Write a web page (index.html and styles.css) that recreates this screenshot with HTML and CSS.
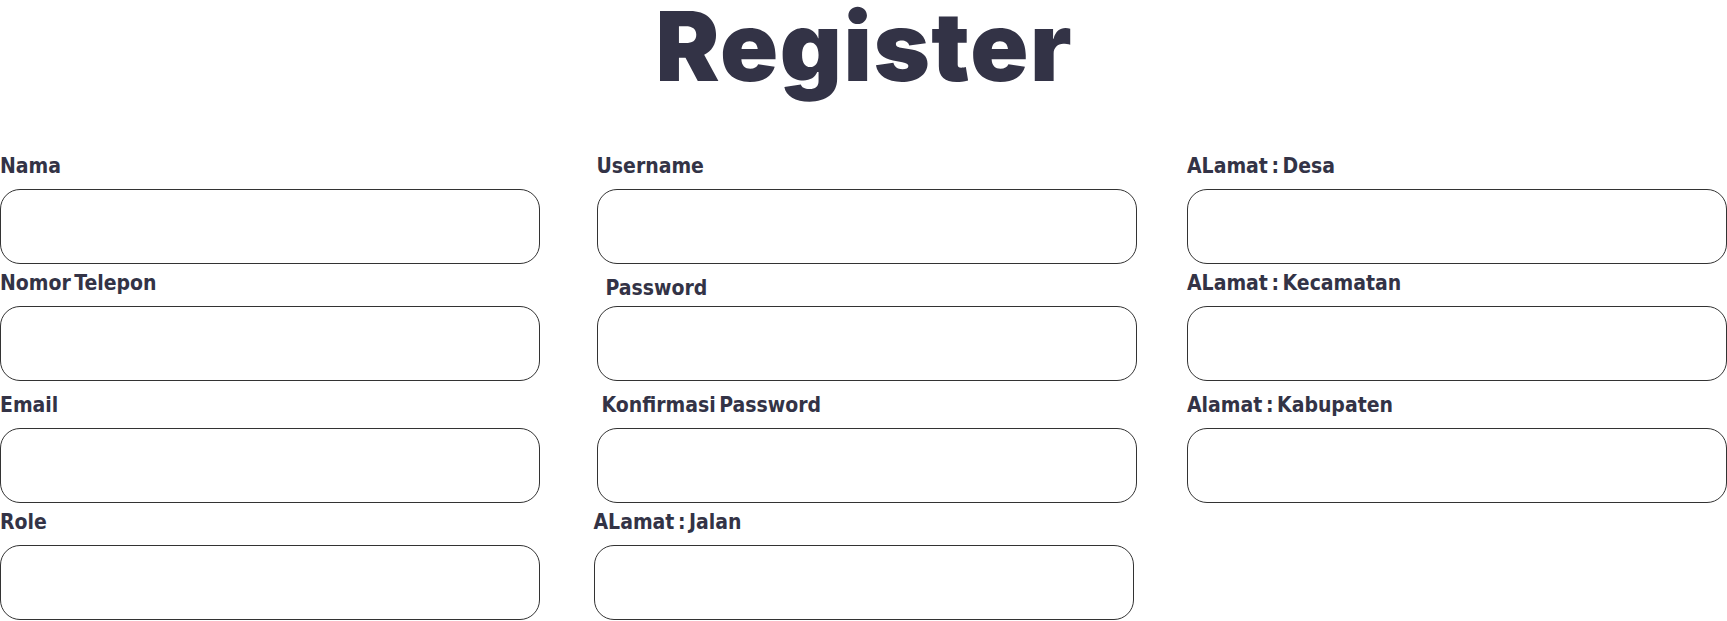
FILE: index.html
```html
<!DOCTYPE html>
<html lang="id">
<head>
<meta charset="utf-8">
<title>Register</title>
<link rel="stylesheet" href="styles.css">
</head>
<body>
<h1 class="title">Register</h1>
<form class="form">
  <div class="field"><label class="label">Nama</label><div class="box"></div></div>
  <div class="field col2"><label class="label">Username</label><div class="box"></div></div>
  <div class="field"><label class="label">ALamat : Desa</label><div class="box"></div></div>

  <div class="field"><label class="label">Nomor Telepon</label><div class="box"></div></div>
  <div class="field col2 pw"><label class="label">Password</label><div class="box"></div></div>
  <div class="field"><label class="label">ALamat : Kecamatan</label><div class="box"></div></div>

  <div class="field spaced"><label class="label">Email</label><div class="box"></div></div>
  <div class="field col2 spaced confirm"><label class="label">Konfirmasi Password</label><div class="box"></div></div>
  <div class="field spaced"><label class="label">Alamat : Kabupaten</label><div class="box"></div></div>

  <div class="field"><label class="label">Role</label><div class="box"></div></div>
  <div class="field"><label class="label">ALamat : Jalan</label><div class="box"></div></div>
</form>
</body>
</html>
```
FILE: styles.css
```css
html, body {
  margin: 0;
  padding: 0;
  background: #ffffff;
}

body {
  width: 1727px;
  height: 621px;
  overflow: hidden;
  color: #333346;
}

.title {
  margin: 0;
  padding-bottom: 20px;
  text-align: center;
  font-family: Inter, "Open Sans", sans-serif;
  font-weight: 900;
  font-size: 96px;
  line-height: 92px;
  letter-spacing: 1.5px;
  text-indent: 1.5px;
  color: #333346;
}

.form {
  margin-top: 42px;
  display: grid;
  grid-template-columns: 540px 540px 540px;
  justify-content: space-between;
  row-gap: 7px;
}

.field {
  display: flex;
  flex-direction: column;
}

.label {
  font-family: "DejaVu Sans", sans-serif;
  font-stretch: condensed;
  font-weight: 700;
  font-size: 21px;
  line-height: 24px;
  letter-spacing: 0;
  word-spacing: -3px;
  color: #333346;
  white-space: nowrap;
}

.box {
  margin-top: 11px;
  height: 75px;
  box-sizing: border-box;
  border: 1px solid #333333;
  border-radius: 20px;
  background: #ffffff;
}

.col2 {
  margin-left: 3px;
  margin-right: -3px;
}

.pw .label {
  padding-left: 9px;
  margin-top: 5px;
  margin-bottom: -5px;
}

.confirm .label {
  padding-left: 5px;
}

.spaced {
  margin-top: 5px;
}
```
